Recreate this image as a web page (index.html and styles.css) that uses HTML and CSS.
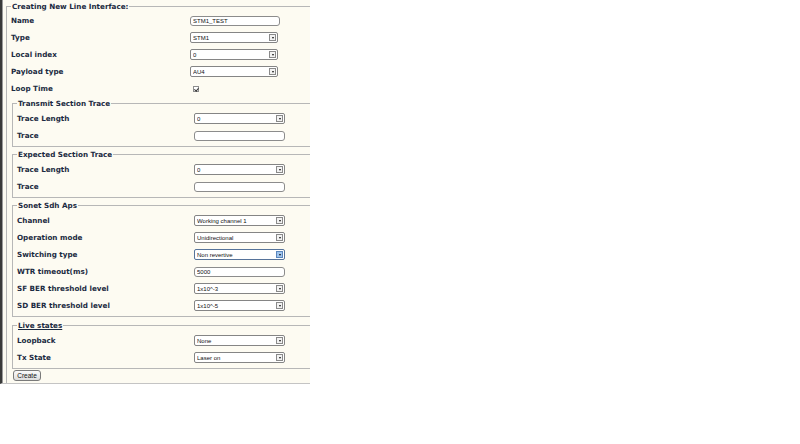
FILE: index.html
```html
<!DOCTYPE html>
<html lang="en">
<head>
    <meta charset="UTF-8">
    <title>Creating New Line Interface</title>
    <link rel="stylesheet" href="styles.css">
</head>
<body>

<div class="frame">
<form class="lineForm">
    <fieldset class="outer">
        <legend>Creating New Line Interface:</legend>

        <div class="row"><label>Name</label><input class="txt" type="text" value="STM1_TEST"></div>
        <div class="row"><label>Type</label><span class="sel"><select><option>STM1</option></select></span></div>
        <div class="row"><label>Local index</label><span class="sel"><select><option>0</option></select></span></div>
        <div class="row"><label>Payload type</label><span class="sel"><select><option>AU4</option></select></span></div>
        <div class="row"><label>Loop Time</label><input class="chk" type="checkbox" checked></div>

        <fieldset class="group">
            <legend>Transmit Section Trace</legend>
            <div class="row"><label>Trace Length</label><span class="sel"><select><option>0</option></select></span></div>
            <div class="row"><label>Trace</label><input class="txt" type="text" value=""></div>
        </fieldset>

        <fieldset class="group">
            <legend>Expected Section Trace</legend>
            <div class="row"><label>Trace Length</label><span class="sel"><select><option>0</option></select></span></div>
            <div class="row"><label>Trace</label><input class="txt" type="text" value=""></div>
        </fieldset>

        <fieldset class="group">
            <legend>Sonet Sdh Aps</legend>
            <div class="row"><label>Channel</label><span class="sel"><select><option>Working channel 1</option></select></span></div>
            <div class="row"><label>Operation mode</label><span class="sel"><select><option>Unidirectional</option></select></span></div>
            <div class="row"><label>Switching type</label><span class="sel hot"><select><option>Non revertive</option></select></span></div>
            <div class="row"><label>WTR timeout(ms)</label><input class="txt" type="text" value="5000"></div>
            <div class="row"><label>SF BER threshold level</label><span class="sel"><select><option>1x10^-3</option></select></span></div>
            <div class="row"><label>SD BER threshold level</label><span class="sel"><select><option>1x10^-5</option></select></span></div>
        </fieldset>

        <fieldset class="group live-group">
            <legend class="live">Live states</legend>
            <div class="row"><label>Loopback</label><span class="sel"><select><option>None</option></select></span></div>
            <div class="row"><label>Tx State</label><span class="sel"><select><option>Laser on</option></select></span></div>
        </fieldset>

        <button type="button" class="btn">Create</button>
    </fieldset>
</form>
</div>

</body>
</html>
```

FILE: styles.css
```css
body { margin: 0; background: #fff; font-family: "DejaVu Sans", Verdana, sans-serif; color: #1b2a41; }

.frame {
    width: 310px; height: 384px; padding-top: 2px; box-sizing: border-box;
    overflow: hidden; background: #fdfbf2;
    border-left: 2px solid #3a3a3a; box-shadow: inset 1px 0 #9a9a9a;
    border-bottom: 1px solid #c4c4c4;
}
.lineForm { margin: 0; }

fieldset { border: 1px solid #b7b7b7; margin: 0; min-width: 0; }
legend { font-size: 7.2px; font-weight: bold; line-height: 9px; padding: 0 1px; }

.outer { width: 340px; margin-left: 4px; padding: 1px 0 4px 4px; }
.group { margin: 2px 0 0 1px; padding: 2px 0 2px 4px; }
.group + .group { margin-top: 3px; }
.group + .live-group { margin-top: 4px; }
.live { text-decoration: underline; }

.row { display: grid; grid-template-columns: 179px 1fr; align-items: center; height: 17px; }
.group .row { grid-template-columns: 177px 1fr; }
.row label { font-size: 7.2px; font-weight: bold; white-space: nowrap; }

/* text boxes */
.txt {
    width: 90px; height: 10px; box-sizing: border-box; margin: 0;
    border: 1px solid #8c8c8c; border-radius: 3px; background: #fff;
    padding: 0 2px; font: 6px "Liberation Sans", Arial, sans-serif; color: #111;
}
.group .txt { width: 91px; }

/* drop downs with a small arrow button */
.sel { position: relative; display: block; width: 88px; height: 11px; }
.group .sel { width: 91px; }
.sel select {
    appearance: none; -webkit-appearance: none; display: block;
    width: 100%; height: 11px; box-sizing: border-box; margin: 0;
    border: 1px solid #858585; border-radius: 2px; background: #fff;
    padding: 0 0 0 2px; font: 6px "Liberation Sans", Arial, sans-serif; color: #111;
}
.sel::after {
    content: ""; position: absolute; right: 2px; top: 2px;
    width: 7px; height: 7px; box-sizing: border-box;
    border: 1px solid #8a8a8a; background: #f2f2f2;
}
.sel::before {
    content: ""; position: absolute; right: 4px; top: 5px; z-index: 1;
    border-left: 1.5px solid transparent; border-right: 1.5px solid transparent;
    border-top: 2px solid #111;
}
.sel.hot select { border-color: #56739a; }
.sel.hot::after { background: #9fc4ee; border-color: #5a86bd; }

/* tick box */
.chk {
    appearance: none; -webkit-appearance: none; position: relative;
    width: 6px; height: 6px; margin: 0 0 0 3px;
    border: 1px solid #8d8d8d; background: #fff;
}
.chk:checked::after {
    content: ""; position: absolute; left: 1px; top: 0;
    width: 1.5px; height: 3px;
    border: solid #333; border-width: 0 1px 1px 0; transform: rotate(40deg);
}

.btn {
    display: block; margin: 1px 0 0 2px; width: 28px; height: 11px; padding: 0;
    border: 1px solid #7a7a7a; border-radius: 3px;
    background: linear-gradient(#fbfbfb, #dcdcdc);
    font: 6.5px "Liberation Sans", Arial, sans-serif; color: #111;
}
```
